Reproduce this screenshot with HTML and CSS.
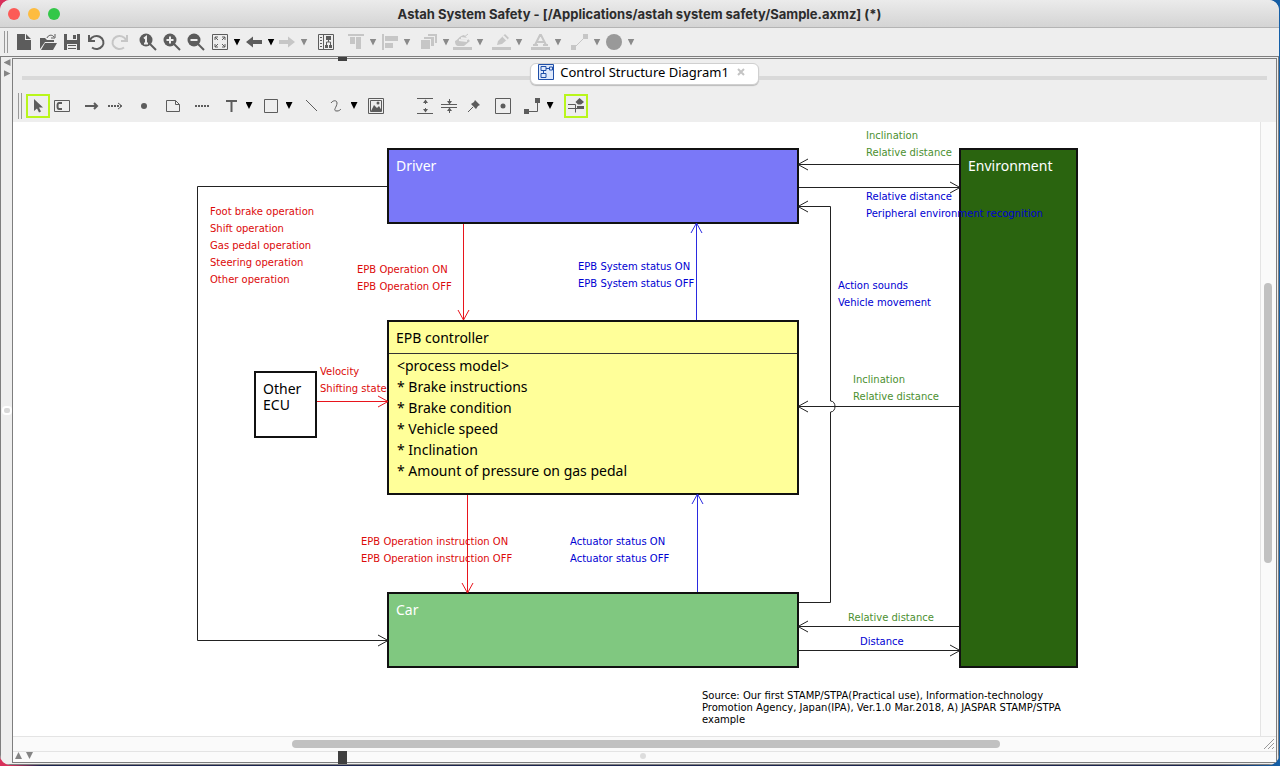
FILE: index.html
```html
<!DOCTYPE html>
<html lang="en">
<head>
  <meta charset="UTF-8" />
  <meta name="viewport" content="width=device-width, initial-scale=1.0" />
  <title>Astah System Safety</title>
  <link rel="stylesheet" href="styles.css">
</head>
<body>
<div class="window">
  <header class="titlebar">
    <div class="lights">
      <button class="light close" aria-label="Close"></button>
      <button class="light minimize" aria-label="Minimize"></button>
      <button class="light zoom" aria-label="Zoom"></button>
    </div>
    <h1>Astah System Safety - [/Applications/astah system safety/Sample.axmz] (*)</h1>
  </header>

  <div class="toolbar main-tools">
    <span class="grip"></span>
    <button class="tool" aria-label="New"><svg viewBox="0 0 24 24"><path class="fill" d="M5 4h8v6h6v10H5zM14 4l5 5h-5z"/></svg></button>
    <button class="tool" aria-label="Open"><svg viewBox="0 0 24 24"><path class="fill" d="M4 19V8h5l2 2h7v2H9zM9 13h12l-4 7H5z"/><path class="line" d="M11 8c1-3 5-4 7-1M19 4v4h-4"/></svg></button>
    <button class="tool" aria-label="Save"><svg viewBox="0 0 24 24"><path class="fill" fill-rule="evenodd" d="M4 4h16v16H4zM7 4v6h10V4zM7 14v6h10v-6z"/><path class="fill" d="M13 5h3v4h-3zM8 15h8v1H8zM8 18h8v1H8z"/></svg></button>
    <button class="tool" aria-label="Undo"><svg viewBox="0 0 24 24"><path class="thick" d="M6 10a7 6.500 0 1 1 2 7.500M5 5v6h6"/></svg></button>
    <button class="tool pale" aria-label="Redo"><svg viewBox="0 0 24 24"><path class="thick" d="M18 10a7 6.500 0 1 0-2 7.500M19 5v6h-6"/></svg></button>
    <button class="tool near" aria-label="Actual size"><svg viewBox="0 0 24 24"><circle class="fill" cx="13" cy="10" r="6.500"/><path class="thick" d="m17 14 6 6"/><path class="cut" d="M11 8.500 13 7v6M11 13.500h4"/></svg></button>
    <button class="tool near" aria-label="Zoom in"><svg viewBox="0 0 24 24"><circle class="fill" cx="12" cy="10" r="6.500"/><path class="thick" d="m16 14 6 6"/><path class="cut" d="M8.500 10h7M12 6.500v7"/></svg></button>
    <button class="tool near" aria-label="Zoom out"><svg viewBox="0 0 24 24"><circle class="fill" cx="11" cy="10" r="6.500"/><path class="thick" d="m15 14 6 6"/><path class="cut" d="M7.500 10h7"/></svg></button>
    <button class="tool near" aria-label="Fit"><svg viewBox="0 0 24 24"><path class="line" d="M4.500 4.500h15v15h-15zM7 10V7h3M7 7l3 3M14 7h3v3M17 7l-3 3M7 14v3h3M7 17l3-3M14 17h3v-3M17 17l-3-3"/></svg></button>
    <button class="drop" aria-label="Fit options"></button>
    <button class="tool near" aria-label="Back"><svg viewBox="0 0 24 24"><path class="fill" d="m4 12 7-5.500V10h9v4h-9v3.500z"/></svg></button>
    <button class="drop" aria-label="Back history"></button>
    <button class="tool pale" aria-label="Forward"><svg viewBox="0 0 24 24"><path class="fill" d="m20 12-7-5.500V10H4v4h9v3.500z"/></svg></button>
    <button class="drop gray" aria-label="Forward history"></button>
    <button class="tool sep" aria-label="Structure tree"><svg viewBox="0 0 24 24"><path class="line" d="M4.500 4.500h15v15h-15zM9.500 4.500v15M6 7.500h2M6 10.500h2M6 13.500h2M6 16.500h2M14.500 9v3M12.500 15v-3h4v3"/><path class="fill" d="M12 6h5v4h-5zM11 15h3v3h-3zM15 15h3v3h-3z"/></svg></button>
    <button class="tool pale sep" aria-label="Align top"><svg viewBox="0 0 24 24"><path class="fill" d="M4 4h16v2H4zM6 7h5v7H6zM12 7h5v12h-5z"/></svg></button>
    <button class="drop gray" aria-label="Align vertical options"></button>
    <button class="tool pale near" aria-label="Align left"><svg viewBox="0 0 24 24"><path class="fill" d="M4 4h2v16H4zM7 6h13v5H7zM7 13h8v5H7z"/></svg></button>
    <button class="drop gray" aria-label="Align horizontal options"></button>
    <button class="tool pale sep" aria-label="Depth"><svg viewBox="0 0 24 24"><path class="fill" d="M4 10h9v9H4zM7 7h10v9h-3V9H7zM11 4h9v9h-2V6h-7z"/></svg></button>
    <button class="drop gray" aria-label="Depth options"></button>
    <button class="tool pale near" aria-label="Fill color"><svg viewBox="0 0 24 24"><path class="fill" d="M2 17h19v3H2zM4 11c3-1 4-5 9-6l6 6-6 5H8c-3 0-4-2-4-5z"/><path class="line" d="m12 8 5-4"/><path class="cut" d="m8 10 8 1M10 8l7 1"/></svg></button>
    <button class="drop gray" aria-label="Fill color options"></button>
    <button class="tool pale sep" aria-label="Line color"><svg viewBox="0 0 24 24"><path class="fill" d="M2 17h19v3H2zM7 15l1-4 7-7 4 4-7 6z"/><path class="cut" d="m13 6 4 4"/></svg></button>
    <button class="drop gray" aria-label="Line color options"></button>
    <button class="tool pale sep" aria-label="Font color"><svg viewBox="0 0 24 24"><path class="fill" d="M2 17h19v3H2z"/><path class="thick" d="m6 15 5-10h1l5 10M8 12h7M4 15h5M14 15h5"/></svg></button>
    <button class="drop gray" aria-label="Font color options"></button>
    <button class="tool pale sep" aria-label="Line style"><svg viewBox="0 0 24 24"><path class="line" d="M6 18 18 6"/><path class="fill" d="M3 15h5v5H3zM15 4h5v5h-5z"/></svg></button>
    <button class="drop gray" aria-label="Line style options"></button>
    <button class="tool mid near" aria-label="Shape color"><svg viewBox="0 0 24 24"><circle class="fill" cx="12" cy="12" r="8"/></svg></button>
    <button class="drop gray" aria-label="Shape color options"></button>
  </div>

  <div class="workspace">
    <aside class="side-strip">
      <button class="expand left" aria-label="Collapse"></button>
      <button class="expand right" aria-label="Expand"></button>
      <span class="divider-dot"></span>
    </aside>

    <main class="panel">
      <span class="top-handle"></span>
      <div class="tabs">
        <div class="tab">
          <svg class="tab-icon" viewBox="0 0 16 16"><path d="M.5.5h15v15H.5z" fill="#dfe9fb" stroke="#1f4fa8"/><path d="M3 2.500h5v4H3zM3 9.500h5v4H3zM11.500 3h3v3h-3zM8 4.500h3.500M5.500 6.500v3" fill="none" stroke="#1f4fa8"/></svg>
          <span>Control Structure Diagram1</span>
          <button class="tab-close" aria-label="Close tab"><svg viewBox="0 0 8 8"><path d="m1 1 6 6M7 1 1 7" stroke="#c4c4c4" stroke-width="2"/></svg></button>
        </div>
      </div>

      <div class="toolbar diagram-tools">
        <span class="grip"></span>
        <button class="tool active" aria-label="Select"><svg viewBox="0 0 24 24"><path class="fill" d="M8 5v12l3-2.500 2 4 2-1-2-4h4z"/></svg></button>
        <button class="tool" aria-label="Component"><svg viewBox="0 0 24 24"><path class="line" d="M4.500 6.500h15v11h-15z"/><path class="thick" d="M12 9H9c-2 0-2 6 0 6h3"/></svg></button>
        <button class="tool sep" aria-label="Control action"><svg viewBox="0 0 24 24"><path class="line heavy" d="M6 12h12M15 9l3 3-3 3"/></svg></button>
        <button class="tool" aria-label="Feedback"><svg viewBox="0 0 24 24"><path class="line heavy dash" d="M5 12h13"/><path class="line" d="m15 9 4 3-4 3"/></svg></button>
        <button class="tool sep" aria-label="Point"><svg viewBox="0 0 24 24"><circle class="fill" cx="12" cy="12" r="3"/></svg></button>
        <button class="tool sep" aria-label="Note"><svg viewBox="0 0 24 24"><path class="line" d="M5.500 6.500h9l4 4v7h-13zM14.500 6.500v4h4"/></svg></button>
        <button class="tool sep" aria-label="Note anchor"><svg viewBox="0 0 24 24"><path class="line heavy dash" d="M5 12h15"/></svg></button>
        <button class="tool sep" aria-label="Text"><svg viewBox="0 0 24 24"><path class="thick" d="M7 7h11M12.500 7v11"/></svg></button>
        <button class="drop" aria-label="Text options"></button>
        <button class="tool sep" aria-label="Rectangle"><svg viewBox="0 0 24 24"><path class="line" d="M5.500 5.500h13v13h-13z"/></svg></button>
        <button class="drop" aria-label="Shape options"></button>
        <button class="tool sep" aria-label="Line"><svg viewBox="0 0 24 24"><path class="line" d="m7 6 11 11"/></svg></button>
        <button class="tool near" aria-label="Free line"><svg viewBox="0 0 24 24"><path class="line" d="M7 9c2-3 6-3 6 0 0 4-5 8 0 8 2 0 3-1 4-2"/></svg></button>
        <button class="drop" aria-label="Free line options"></button>
        <button class="tool sep" aria-label="Image"><svg viewBox="0 0 24 24"><path class="line" d="M4.500 4.500h15v15h-15zM6.500 6.500h11v11h-11z"/><path class="fill" d="m7 17 3-6 3 3 2-2 3 5z"/><circle class="fill" cx="14" cy="9" r="1.500"/></svg></button>
        <button class="tool group" aria-label="Widen spacing"><svg viewBox="0 0 24 24"><path class="line" d="M4 4.500h16M4 19.500h16M12.500 6v4M12.500 14v4"/><path class="fill" d="m10 9 2.500-3.500L15 9zM10 15l2.500 3.500L15 15z"/></svg></button>
        <button class="tool" aria-label="Narrow spacing"><svg viewBox="0 0 24 24"><path class="line" d="M4 10.500h16M4 13.500h16M12.500 5v4M12.500 15v4"/><path class="fill" d="M10 7h5l-2.500 3.500zM10 17h5l-2.500-3.500z"/></svg></button>
        <button class="tool near" aria-label="Pin"><svg viewBox="0 0 24 24"><path class="fill" d="m13 6 5 5-2 1-2 3-5-5 3-2z"/><path class="line" d="m11 13-5 5"/></svg></button>
        <button class="tool sep" aria-label="Center"><svg viewBox="0 0 24 24"><path class="line" d="M4.500 4.500h15v15h-15z"/><circle class="fill" cx="12" cy="12" r="2.500"/></svg></button>
        <button class="tool sep" aria-label="Connector style"><svg viewBox="0 0 24 24"><path class="line" d="M6 17.500h11.500V6"/><path class="fill" d="M4 15h5v5H4zM15 4h5v5h-5z"/></svg></button>
        <button class="drop" aria-label="Connector options"></button>
        <button class="tool active last" aria-label="Line jump"><svg viewBox="0 0 24 24"><path class="line" d="M4 10.500h7.500v8M4 14.500h16"/><path class="fill" d="m15.500 4 4.500 4-3 2.500h-3L11.500 8zM13 12h7v3h-7z"/></svg></button>
      </div>

      <div class="canvas">
        <section class="node driver"><h2>Driver</h2></section>
        <section class="node controller">
          <h2>EPB controller</h2>
          <ul>
            <li>&lt;process model&gt;</li>
            <li>* Brake instructions</li>
            <li>* Brake condition</li>
            <li>* Vehicle speed</li>
            <li>* Inclination</li>
            <li>* Amount of pressure on gas pedal</li>
          </ul>
        </section>
        <section class="node car"><h2>Car</h2></section>
        <section class="node environment"><h2>Environment</h2></section>
        <section class="node ecu"><h2>Other ECU</h2></section>

        <svg class="links" aria-hidden="true">
          <!-- driver / car -->
          <path d="M374 64.500H184.500v454H375M365 513l10 5.500-10 5.500"/>
          <!-- environment -->
          <path d="M946 42.500H786M795 37l-10 5.500 10 5.500"/>
          <path d="M786 65.500h160M937 60l10 5.500-10 5.500"/>
          <path d="M946 284.500H786M795 279l-10 5.500 10 5.500"/>
          <path d="M946 504.500H786M795 499l-10 5.500 10 5.500"/>
          <path d="M786 528.500h160M937 523l10 5.500-10 5.500"/>
          <!-- car to driver, jumps over the environment line -->
          <path d="M786 480.500h31.500V290c6 0 6-11 0-11V84.500H786M795 79l-10 5.500 10 5.500"/>
          <!-- control actions -->
          <path class="red" d="M450.500 102v96M445 188l5.500 10 5.500-10"/>
          <path class="red" d="M454.500 373v97M449 461l5.500 10 5.500-10"/>
          <path class="red" d="M304 279.500h71M365 274l10 5.500-10 5.500"/>
          <!-- feedback -->
          <path class="blue" d="M683.500 198v-96M678 111l5.500-10 5.500 10"/>
          <path class="blue" d="M684.500 470v-97M679 382l5.500-10 5.500 10"/>
        </svg>

        <p class="label red operations">Foot brake operation<br>Shift operation<br>Gas pedal operation<br>Steering operation<br>Other operation</p>
        <p class="label red epb-operation">EPB Operation ON<br>EPB Operation OFF</p>
        <p class="label red velocity">Velocity<br>Shifting state</p>
        <p class="label red instruction">EPB Operation instruction ON<br>EPB Operation instruction OFF</p>
        <p class="label blue system-status">EPB System status ON<br>EPB System status OFF</p>
        <p class="label blue actuator">Actuator status ON<br>Actuator status OFF</p>
        <p class="label blue sounds">Action sounds<br>Vehicle movement</p>
        <p class="label green env-driver">Inclination<br>Relative distance</p>
        <p class="label blue driver-env">Relative distance<br>Peripheral environment recognition</p>
        <p class="label green env-controller">Inclination<br>Relative distance</p>
        <p class="label green env-car">Relative distance</p>
        <p class="label blue car-env">Distance</p>
        <p class="source">Source: Our first STAMP/STPA(Practical use), Information-technology<br>Promotion Agency, Japan(IPA), Ver.1.0 Mar.2018, A) JASPAR STAMP/STPA<br>example</p>
      </div>
      <div class="scroll-y"><span class="thumb"></span></div>
      <div class="scroll-x">
        <span class="thumb"></span>
        <svg class="resize" viewBox="0 0 12 12"><path d="M1 11 11 1M5 11l6-6M9 11l2-2"/></svg>
      </div>
      <footer class="bottom-strip">
        <button class="expand up" aria-label="Show"></button>
        <button class="expand down" aria-label="Hide"></button>
        <span class="bottom-dot"></span>
        <span class="bottom-handle"></span>
      </footer>
    </main>
  </div>
</div>
</body>
</html>
```

FILE: styles.css
```css
* {
    box-sizing: border-box;
}
body {
    margin: 0;
    height: 100vh;
    overflow: hidden;
    font-family: "Noto Sans", "Open Sans", sans-serif;
    font-size: 13px;
    color: #000;
    background: linear-gradient(90deg, #d8305a 0, #d8305a 10px, #1c2550 40px, #1c2550 95%, #1560a8 100%);
}
h1, h2, p, ul {
    margin: 0;
    padding: 0;
    font-weight: normal;
}
ul {
    list-style: none;
}
button {
    padding: 0;
    border: 0;
    background: none;
}

.window {
    display: flex;
    flex-direction: column;
    height: calc(100vh - 1px);
    margin-right: 1px;
    border-radius: 10px;
    overflow: hidden;
    background: #eee;
}

/* title bar */
.titlebar {
    display: grid;
    grid-template-columns: 1fr auto 1fr;
    align-items: center;
    height: 28px;
    padding: 0 8px;
    background: linear-gradient(#ebebeb, #d4d4d4);
    border-bottom: 1px solid #b4b4b4;
}
.titlebar h1 {
    font-family: Inter, Roboto, sans-serif;
    font-size: 13px;
    font-weight: bold;
    color: #2c2c2c;
}
.lights {
    display: flex;
    gap: 8px;
}
.light {
    width: 12px;
    height: 12px;
    border-radius: 50%;
}
.light.close {
    background: #fc5b57;
}
.light.minimize {
    background: #fdbc40;
}
.light.zoom {
    background: #33c748;
}

/* toolbars */
.toolbar {
    display: flex;
    align-items: center;
    flex-shrink: 0;
}
.main-tools {
    height: 28px;
    padding-left: 4px;
}
.diagram-tools {
    grid-column: 1 / 3;
    height: 34px;
    padding: 1px 0 0 5px;
}
.grip {
    width: 4px;
    height: 22px;
    margin-right: 4px;
    border: solid #999;
    border-width: 0 1px;
}
.diagram-tools .grip {
    height: 26px;
}
.tool {
    width: 24px;
    height: 24px;
    color: #5c5c5c;
}
.tool svg {
    display: block;
    width: 100%;
    height: 100%;
}
.tool.pale {
    color: #c6c6c6;
}
.tool.mid {
    color: #999;
}
.tool.sep {
    margin-left: 5px;
}
.main-tools .tool.sep {
    margin-left: 6px;
}
.tool.near {
    margin-left: 1px;
}
.tool.group {
    margin-left: 25px;
}
.tool.last {
    margin-left: 9px;
}
.tool.active {
    box-shadow: inset 0 0 0 2px #b9f61c;
}
.drop {
    width: 8px;
    height: 24px;
    margin-left: 1px;
}
.diagram-tools .drop {
    margin: 0 1px 0 2px;
}
.drop::before {
    content: "";
    display: block;
    width: 7px;
    height: 7px;
    margin: 0 auto;
    background: #000;
    clip-path: polygon(0 0, 100% 0, 50% 100%);
}
.drop.gray::before {
    background: #8a8a8a;
}
.fill {
    fill: currentColor;
}
.line {
    fill: none;
    stroke: currentColor;
}
.heavy {
    stroke-width: 2;
}
.dash {
    stroke-dasharray: 2 1;
}
.thick {
    fill: none;
    stroke: currentColor;
    stroke-width: 2;
}
.cut {
    fill: none;
    stroke: #eee;
    stroke-width: 2;
}

/* workspace */
.workspace {
    display: flex;
    flex: 1;
    min-height: 0;
    padding: 1px;
    border: 1px solid #7e7e7e;
}
.side-strip {
    display: flex;
    flex-direction: column;
    align-items: center;
    gap: 4px;
    width: 10px;
    padding: 1px 0 24px;
}
.expand {
    width: 7px;
    height: 7px;
    background: #858585;
}
.expand.left {
    clip-path: polygon(100% 0, 100% 100%, 0 50%);
}
.expand.right {
    clip-path: polygon(0 0, 100% 50%, 0 100%);
}
.expand.up {
    clip-path: polygon(50% 0, 100% 100%, 0 100%);
}
.expand.down {
    clip-path: polygon(0 0, 100% 0, 50% 100%);
}
.divider-dot {
    width: 10px;
    height: 9px;
    margin: auto 0;
    border: 2px solid #fff;
    border-radius: 4px;
    background: #d8d8d8;
}
.panel {
    position: relative;
    display: grid;
    grid-template-columns: 1fr 16px;
    grid-template-rows: 29px 34px 1fr 16px 10px;
    flex: 1;
    min-width: 0;
    border: 1px solid #7e7e7e;
}
.top-handle {
    position: absolute;
    top: -2px;
    left: 325px;
    width: 9px;
    height: 4px;
    background: #404040;
}

/* tabs */
.tabs {
    grid-column: 1 / 3;
    display: flex;
    align-items: center;
    justify-content: center;
    padding: 0 9px;
    margin-top: 1px;
}
.tabs::before, .tabs::after {
    content: "";
    flex: 1;
    height: 4px;
    margin-top: 8px;
    background: #d9d9d9;
}
.tab {
    display: flex;
    align-items: center;
    gap: 6px;
    height: 22px;
    padding: 0 13px 4px 7px;
    border: 1px solid #d0d0d0;
    border-radius: 6px;
    box-shadow: 0 1px 1px #bbb;
    background: #fff;
}
.tab-icon {
    width: 16px;
    height: 16px;
}
.tab-close {
    width: 8px;
    height: 8px;
    margin-left: 2px;
}
.tab-close svg {
    display: block;
}

/* scroll bars */
.scroll-y {
    display: flex;
    justify-content: center;
    padding: 161px 1px 0 0;
    border-left: 1px solid #e4e4e4;
    background: #fafafa;
}
.scroll-x {
    grid-column: 1 / 3;
    display: flex;
    align-items: center;
    justify-content: space-between;
    padding: 0 1px 0 279px;
    border: solid #e4e4e4;
    border-width: 1px 0;
    background: #fafafa;
}
.thumb {
    border-radius: 4px;
    background: #c1c1c1;
}
.scroll-y .thumb {
    width: 8px;
    height: 280px;
}
.scroll-x .thumb {
    width: 72%;
    height: 8px;
}
.resize {
    width: 12px;
    height: 12px;
    fill: none;
    stroke: #999;
}

/* bottom strip */
.bottom-strip {
    grid-column: 1 / 3;
    position: relative;
    display: flex;
    align-items: center;
    gap: 4px;
    padding: 0 27px 3px 2px;
    background: #fbfbfb;
}
.bottom-dot {
    width: 6px;
    height: 6px;
    margin: 0 auto;
    border-radius: 50%;
    background: #ddd;
}
.bottom-handle {
    position: absolute;
    top: -1px;
    left: 325px;
    width: 9px;
    height: 13px;
    background: #404040;
}

/* diagram */
.canvas {
    position: relative;
    overflow: hidden;
    background: #fff;
}
.node {
    position: absolute;
    border: 2px solid #111;
    font-size: 14px;
}
.node h2 {
    padding: 8px 7px 7px;
    font-size: 14px;
    line-height: 16px;
}
.driver {
    top: 26px;
    left: 374px;
    width: 412px;
    height: 76px;
    color: #fff;
    background: #7a78f8;
}
.controller {
    top: 198px;
    left: 374px;
    width: 412px;
    height: 175px;
    background: #ffff99;
}
.controller h2 {
    border-bottom: 1px solid #333;
}
.controller ul {
    padding: 1px 8px;
    line-height: 21px;
}
.car {
    top: 470px;
    left: 374px;
    width: 412px;
    height: 76px;
    color: #fff;
    background: #80c880;
}
.environment {
    top: 26px;
    left: 946px;
    width: 119px;
    height: 520px;
    color: #fff;
    background: #2a640f;
}
.ecu {
    top: 249px;
    left: 241px;
    width: 63px;
    height: 67px;
    background: #fff;
}
.links {
    position: absolute;
    top: 0;
    left: 0;
    width: 100%;
    height: 100%;
    fill: none;
    stroke: #222;
}
.links .red {
    stroke: #e8141c;
}
.links .blue {
    stroke: #2a2ae0;
}

.label {
    position: absolute;
    font-family: "DejaVu Sans", sans-serif;
    font-size: 10px;
    line-height: 17px;
    white-space: nowrap;
}
.label.red {
    color: #dc0a0a;
}
.label.blue {
    color: #0000d2;
}
.label.green {
    color: #4c9030;
}
.operations {
    top: 81px;
    left: 197px;
}
.epb-operation {
    top: 139px;
    left: 344px;
}
.velocity {
    top: 241px;
    left: 307px;
}
.instruction {
    top: 411px;
    left: 348px;
}
.system-status {
    top: 136px;
    left: 565px;
}
.actuator {
    top: 411px;
    left: 557px;
}
.sounds {
    top: 155px;
    left: 825px;
}
.env-driver {
    top: 5px;
    left: 853px;
}
.driver-env {
    top: 66px;
    left: 853px;
}
.env-controller {
    top: 249px;
    left: 840px;
}
.env-car {
    top: 487px;
    left: 835px;
}
.car-env {
    top: 511px;
    left: 847px;
}
.source {
    position: absolute;
    top: 568px;
    left: 689px;
    font-family: "DejaVu Sans", sans-serif;
    font-size: 10px;
    line-height: 12px;
    white-space: nowrap;
}
```
